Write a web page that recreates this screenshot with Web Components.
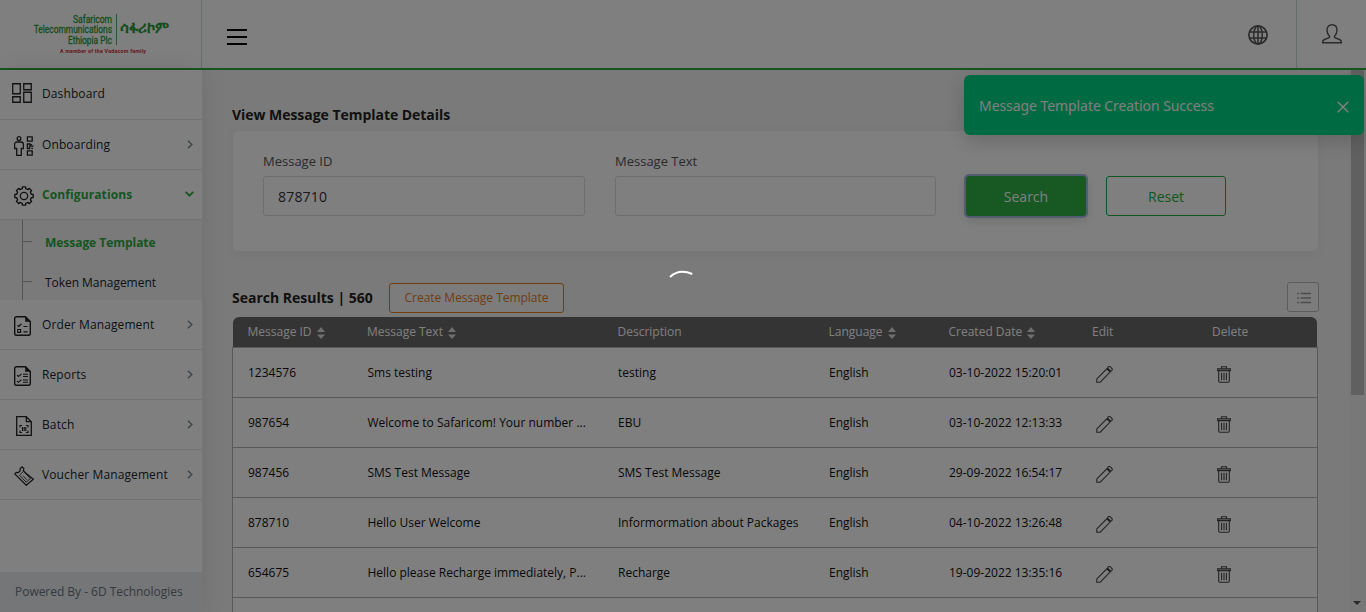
<!DOCTYPE html>
<html lang="en">
<head>
<meta charset="utf-8">
<title>View Message Template Details</title>
<style>
  html, body { margin: 0; height: 100%; overflow: hidden; }
  body { font-family: "Open Sans", "Noto Sans", sans-serif; font-size: 12px; color: #212529; background: #f4f4f4; }
</style>
</head>
<body>
<app-shell></app-shell>
<script>
const define = (name, html, setup) => {
  const tpl = document.createElement('template');
  tpl.innerHTML = html;
  customElements.define(name, class extends HTMLElement {
    constructor() {
      super();
      this.attachShadow({ mode: 'open' }).appendChild(tpl.content.cloneNode(true));
    }
    connectedCallback() { if (setup) setup(this, this.shadowRoot); }
  });
};

/* ---------- icons ---------- */
const gear = (() => {
  let d = '';
  const n = 8, c = 10;
  for (let i = 0; i < n; i++) {
    const a = i * 2 * Math.PI / n;
    [[-.24, 7.5], [-.17, 9.3], [.17, 9.3], [.24, 7.5]].forEach(([o, r], k) => {
      const x = (c + r * Math.sin(a + o)).toFixed(2), y = (c - r * Math.cos(a + o)).toFixed(2);
      d += (i || k ? 'L' : 'M') + x + ' ' + y;
    });
  }
  return d + 'Z';
})();
const ICONS = {
  dashboard: [20, 20, '<path d="M.75.75h7.5v10H.75zM11.75.75h7.5v6h-7.5zM11.75 9.25h7.5v10h-7.5zM.75 13.75h7.5v5.5H.75z" stroke-width="1.3"/>'],
  onboarding: [20, 20, '<g stroke-width="1.300"><circle cx="5" cy="2.600" r="1.900"/><path d="M3 6h4c1.500 0 2.400.9 2.400 2.300v4.200H7.300v6.800H2.700v-6.800H.6V8.300C.6 6.900 1.500 6 3 6z"/><path d="M13.400.8h4.800v4.400h-4.800zM13.400 14.800h4.800v4.400h-4.800z"/><path d="M13.400 7.500v5h2.200v-2M13 8h3v2.200h3.500M17.500 8v1.200M17.300 12.300h1.700"/></g>'],
  gear: [20, 20, `<path d="${gear}" stroke-width="1.400" stroke-linejoin="round"/><circle cx="10" cy="10" r="3.700" stroke-width="1.300"/>`],
  order: [17, 20, '<path d="M11.500.7H2.500a1.800 1.800 0 0 0-1.800 1.800v15a1.800 1.800 0 0 0 1.800 1.800h12a1.800 1.800 0 0 0 1.800-1.800V5.500z" stroke-width="1.400"/><path d="M11.200.5v5.300h5.300z" fill="currentColor" stroke="none"/><path d="M3.500 9.200l1.300 1.200 2.700-2.600M9.500 10.500h4M9.500 15.800h4M3.800 13.500h2.800v2.800H3.800z" stroke-width="1.200"/>'],
  reports: [17, 20, '<path d="M11.500.7H2.500a1.800 1.800 0 0 0-1.800 1.800v15a1.800 1.800 0 0 0 1.800 1.800h12a1.800 1.800 0 0 0 1.800-1.800V5.500z" stroke-width="1.400"/><path d="M11.200.5v5.300h5.300z" fill="currentColor" stroke="none"/><path d="M3 9.200l1.500 1.300 3-2.700M3 15l1.500 1.300 3-2.700M9 8.300h5M9 10.500h5M9 14h5M9 16.300h5" stroke-width="1.100"/>'],
  batch: [16, 20, '<path d="M10.300.7H.7v18.600h14.600V5.700zM10.300.7v5h5" stroke-width="1.300"/><path d="M4 11.500v-2h2M10 9.500h2v2M4 14.500v2h2M10 16.500h2v-2M6.500 11v4M8.200 11v4M9.800 11v4" stroke-width="1.100"/>'],
  voucher: [20, 20, '<path d="M8.200.8l1.600 1.700-.4 2.200 2.200 2.200L19.300 13.200 12.300 19.300.8 7.900l1.400-1.500 2.100.2 1.900-1.800L6 2.800z" stroke-width="1.200"/><path d="M5.600 9.200l3.900-3.900 6.900 7.200-4.200 3.700zM9 9.700l4 4" stroke-width=".9"/>'],
  globe: [20, 20, '<circle cx="10" cy="10" r="9.100" stroke-width="1.700"/><ellipse cx="10" cy="10" rx="4.300" ry="9.100" stroke-width="1.500"/><path d="M10 1v18M1.500 7h17M1.500 13h17" stroke-width="1.500"/>'],
  user: [20, 20, '<path d="M7.600 12.400C5.900 10.900 5 8.900 5 6.100 5 2.700 6.900.8 10 .8s5 1.900 5 5.300c0 2.800-.9 4.800-2.600 6.300l.2 1.200 4.900 1.900c1.200.5 1.800 1.100 1.800 2.100v1.200H.7v-1.200c0-1 .6-1.600 1.800-2.100l4.900-1.900z" stroke-width="1.400"/>'],
  right: [6, 9, '<path d="M.9.700l3.900 3.800-3.900 3.800" stroke-width="1.500"/>'],
  down: [9, 6, '<path d="M.7.900l3.800 3.800L8.300.900" stroke-width="1.700"/>'],
  close: [12, 12, '<path d="M.7.700l10.600 10.600M11.300.700L.7 11.300" stroke-width="1.500"/>'],
  list: [14, 12, '<path d="M3.500 1.500H14M3.500 6H14M3.500 10.500H14M.2 1.500h1.800M.2 6h1.800M.2 10.500h1.800" stroke-width="1.400"/>'],
  pencil: [17, 17, '<path d="M.8 16.200v-3.300L10.800 2.800l3.300 3.300L4.200 16.200zM11.600 2.100c0-1.300 1.500-1.900 2.500-1.400l1.900 1.800c.6 1.200-.1 2.500-1.300 2.700z" stroke-width="1.100"/>'],
  trash: [14, 17, '<path d="M.6 2.900h12.800v1.700H.6zM4.500 2.800V.7h5v2.100M1.700 4.800v10.300c0 .8.400 1.200 1.200 1.200h8.200c.8 0 1.200-.4 1.200-1.200V4.800M4.600 6.700v7.600M7 6.700v7.600M9.400 6.700v7.600" stroke-width="1.100"/>'],
  sort: [8, 12, '<path d="M0 5l4-5 4 5zM0 7.500l4 4.500 4-4.500z" fill="currentColor" stroke="none"/>'],
  caret: [8, 4, '<path d="M0 0h8L4 4z" fill="currentColor" stroke="none"/>']
};
define('ui-icon', '<style>:host{display:block;flex:none;line-height:0}</style><span></span>', (el, root) => {
  const [w, h, body] = ICONS[el.getAttribute('name')];
  root.querySelector('span').innerHTML =
    `<svg width="${w}" height="${h}" viewBox="0 0 ${w} ${h}" fill="none" stroke="currentColor">${body}</svg>`;
});

/* ---------- header ---------- */
define('brand-logo', `
<style>
  :host { display: block; width: 201px; height: 68px; border-right: 1px solid #cfe3d8; flex: none; }
  text { font-family: Roboto, sans-serif; }
</style>
<svg width="201" height="68" viewBox="0 0 201 68">
  <g fill="#2a9a3c" stroke="#2a9a3c" stroke-width=".3" font-size="10.500" text-anchor="end">
    <text transform="translate(112 22.500) scale(.81 1)">Safaricom</text>
    <text transform="translate(112 33) scale(.8 1)">Telecommunications</text>
    <text transform="translate(112 43.500) scale(.8 1)">Ethiopia Plc</text>
  </g>
  <path d="M116.500 14v31" stroke="#58ad66"/>
  <text transform="translate(120 32.500) scale(1 1.350)" font-size="11.500" font-weight="700" fill="#2a9a3c" textLength="49" lengthAdjust="spacingAndGlyphs">ሳፋሪኮም</text>
  <text x="60" y="53" font-size="5.300" font-weight="700" fill="#d02c38" textLength="86">A member of the Vodacom family</text>
</svg>`);

define('top-bar', `
<style>
  :host { display: flex; height: 68px; background: #fff; border-bottom: 2px solid #2cab42; color: #333; }
  .menu { display: grid; gap: 5px; margin: 29px 0 0 25px; align-content: start; }
  .menu i { width: 20px; height: 2px; background: #000; }
  .globe { margin: 25px 28px 0 auto; color: #555; }
  .user { border-left: 1px solid #c4e0d4; width: 44px; padding: 24px 0 0 25px; color: #555; }
</style>
<brand-logo></brand-logo>
<div class="menu"><i></i><i></i><i></i></div>
<ui-icon class="globe" name="globe"></ui-icon>
<div class="user"><ui-icon name="user"></ui-icon></div>`);

/* ---------- sidebar ---------- */
define('nav-item', `
<style>
  :host { display: flex; align-items: center; height: 49px; border-bottom: 1px solid #e4e4e4; font-size: 12px; letter-spacing: .11px; }
  .ico { width: 42px; box-sizing: border-box; padding-left: 14px; padding-top: 2px; color: #222; }
  :host([icon="dashboard"]) .ico { padding: 0 0 4px 12px; }
  :host([icon="dashboard"]) .label { padding: 0 0 1px; }
  :host([icon="batch"]) .ico { padding-left: 16px; }
  .label { flex: 1; line-height: 20px; white-space: nowrap; padding-top: 1px; }
  .arrow { margin-right: 9px; color: #7c8c92; padding-bottom: 1px; }
  :host([open]) .label { color: #2cab42; font-weight: 700; }
  :host([open]) .arrow { color: #2cab42; margin-right: 8px; }
</style>
<div class="ico"></div><div class="label"><slot></slot></div><div class="arrow"></div>`, (el, root) => {
  root.querySelector('.ico').innerHTML = `<ui-icon name="${el.getAttribute('icon')}"></ui-icon>`;
  if (!el.hasAttribute('leaf'))
    root.querySelector('.arrow').innerHTML = `<ui-icon name="${el.hasAttribute('open') ? 'down' : 'right'}"></ui-icon>`;
});

define('sub-item', `
<style>
  :host { display: flex; height: 40px; font-size: 12px; letter-spacing: -.04px; margin-left: 22px; border-left: 1px solid #aaa; }
  i { width: 9px; height: 1px; background: #aaa; margin-top: 21px; }
  span { margin: 13px 0 0 13px; line-height: 20px; white-space: nowrap; }
  :host([active]) span { color: #2cab42; font-weight: 700; }
</style><i></i><span><slot></slot></span>`);

define('side-bar', `
<style>
  :host { display: flex; flex-direction: column; width: 202px; background: #fff; flex: none; box-shadow: 0 0 24px rgba(0,0,0,.1); z-index: 1; }
  .sub { background: #f4f4f4; }
  .foot { margin-top: auto; height: 40px; line-height: 39px; padding-left: 15px; background: #e9ecef; color: #6c757d; font-size: 12px; letter-spacing: -.03px; }
</style>
<nav-item icon="dashboard" leaf>Dashboard</nav-item>
<nav-item icon="onboarding">Onboarding</nav-item>
<nav-item icon="gear" open>Configurations</nav-item>
<div class="sub"><sub-item active>Message Template</sub-item><sub-item>Token Management</sub-item></div>
<nav-item icon="order">Order Management</nav-item>
<nav-item icon="reports">Reports</nav-item>
<nav-item icon="batch">Batch</nav-item>
<nav-item icon="voucher">Voucher Management</nav-item>
<div class="foot">Powered By - 6D Technologies</div>`);

/* ---------- search form ---------- */
define('form-field', `
<style>
  :host { display: block; }
  label { display: block; font-size: 13px; line-height: 20px; height: 25px; color: #555; }
  .box { height: 38px; line-height: 39px; border: 1px solid #dcdcdc; border-radius: 3px; padding-left: 14px; font-size: 14px; letter-spacing: .2px; color: #333; }
</style><label></label><div class="box"><slot></slot></div>`, (el, root) => {
  root.querySelector('label').textContent = el.getAttribute('label');
});

define('ui-button', `
<style>
  :host { display: block; box-sizing: border-box; text-align: center; border-radius: 3px; border: 1px solid #2cab42; color: #2cab42; height: 40px; line-height: 39px; font-size: 14px; white-space: nowrap; }
  :host([kind="primary"]) { background: #2fb146; border-color: #2fb146; color: #fff; box-shadow: 0 0 0 2px #a9b8e4, 0 4px 12px rgba(0,0,0,.15); }
  :host([kind="create"]) { height: 30px; line-height: 28px; border-color: #e07b1c; color: #e07b1c; background: #f9f9f9; font-size: 12px; letter-spacing: -.03px; }
</style><slot></slot>`);

define('search-panel', `
<style>
  :host { display: grid; grid-template-columns: 322px 321px 120px 120px; column-gap: 30px; align-items: end; align-content: start;
    box-sizing: border-box; height: 120px; padding: 20px 30px 0; background: #fff; border-radius: 5px; box-shadow: 0 2px 12px rgba(0,0,0,.05); }
  .reset { margin-left: -10px; margin-right: 10px; }
</style>
<form-field label="Message ID">878710</form-field>
<form-field label="Message Text"></form-field>
<ui-button kind="primary">Search</ui-button>
<ui-button class="reset">Reset</ui-button>`);

/* ---------- results ---------- */
define('results-table', `
<style>
  :host { display: block; width: 1086px; }
  .row { display: grid; grid-template-columns: 119.500px 250.500px 211px 120px 143.500px 120px 1fr; padding-left: 15px; }
  .head { height: 30px; line-height: 30px; margin: 0 1px; padding-left: 14.500px; background: #686868; color: #fff; border-radius: 6px 6px 0 0; }
  .head span { display: flex; gap: 5px; align-items: center; height: 29px; }
  .head ui-icon { margin-top: 2px; color: #ddd; }
  .body { height: 49px; line-height: 49px; border: 1px solid #b2b2b2; border-bottom: 0; background: #fff; color: #111; }
  .head, .body { font-size: 12px; white-space: nowrap; }
  .body ui-icon { color: #444; padding-top: 18px; }
  .body .pen { padding-left: 3px; } .body .bin { padding-left: 4px; }
</style>
<div class="row head"></div><div class="rows"></div>`, (el, root) => {
  const s = '<ui-icon name="sort"></ui-icon>';
  root.querySelector('.head').innerHTML = ['Message ID' + s, 'Message Text' + s, 'Description', 'Language' + s, 'Created Date' + s, 'Edit', 'Delete']
    .map(t => `<span>${t}</span>`).join('');
  root.querySelector('.rows').innerHTML = [
    ['1234576', 'Sms testing', 'testing', 'English', '03-10-2022 15:20:01'],
    ['987654', 'Welcome to Safaricom! Your number ...', 'EBU', 'English', '03-10-2022 12:13:33'],
    ['987456', 'SMS Test Message', 'SMS Test Message', 'English', '29-09-2022 16:54:17'],
    ['878710', 'Hello User Welcome', 'Informormation about Packages', 'English', '04-10-2022 13:26:48'],
    ['654675', 'Hello please Recharge immediately, P...', 'Recharge', 'English', '19-09-2022 13:35:16'],
    null
  ].map(r => r ? `<div class="row body">${r.map(t => `<span>${t}</span>`).join('')}<ui-icon class="pen" name="pencil"></ui-icon><ui-icon class="bin" name="trash"></ui-icon></div>`
    : '<div class="row body"></div>').join('');
});

define('page-content', `
<style>
  :host { display: block; flex: 1; min-width: 0; height: 542px; overflow: hidden; padding-left: 30px; box-sizing: border-box; }
  h2 { margin: 0; font-size: 14px; font-weight: 700; letter-spacing: -.04px; line-height: 20px; color: #222; white-space: nowrap; }
  .title { padding-top: 35px; }
  search-panel { margin: 6px 0 0 1px; width: 1085px; }
  .bar { display: flex; align-items: flex-start; width: 1087px; margin-top: 31px; height: 35px; }
  .bar h2 { width: 157px; padding-top: 6px; letter-spacing: 0; }
  .bar ui-button { width: 175px; margin-top: 1px; }
  .list { margin-left: auto; box-sizing: border-box; width: 32px; height: 30px; border: 1px solid #b8b8b8; border-radius: 3px; display: grid; place-items: center; color: #999; background: #f9f9f9; }
  .list ui-icon { padding: 1px 0 0 1px; }
</style>
<h2 class="title">View Message Template Details</h2>
<search-panel></search-panel>
<div class="bar"><h2>Search Results | 560</h2><ui-button kind="create">Create Message Template</ui-button><div class="list"><ui-icon name="list"></ui-icon></div></div>
<results-table></results-table>`);

define('scroll-track', `
<style>
  :host { display: flex; flex-direction: column; justify-content: space-between; width: 17px; background: #f1f1f1; }
  i { width: 13px; height: 325px; margin-left: 2px; background: #c1c1c1; }
  ui-icon { margin: 0 0 7px 4px; color: #505050; }
</style><i></i><ui-icon name="caret"></ui-icon>`);

/* ---------- overlays ---------- */
define('toast-message', `
<style>
  :host { position: absolute; left: 964px; top: 75px; width: 400px; height: 60px; box-sizing: border-box; padding: 0 15px; display: flex; align-items: center; justify-content: space-between;
    border-radius: 6px; background: #00d684; color: #fff; font-family: "Noto Sans", sans-serif; font-size: 14px; letter-spacing: -.07px; box-shadow: 0 6px 20px rgba(0,0,0,.18); z-index: 2; }
  ui-icon { margin-top: 4px; }
</style><span><slot></slot></span><ui-icon name="close"></ui-icon>`);

define('loading-mask', `
<style>
  :host { position: absolute; inset: 0; background: rgba(0,0,0,.5); z-index: 3; }
  svg { position: absolute; left: 664px; top: 268px; }
</style>
<svg width="36" height="36" viewBox="0 0 36 36" fill="none"><path d="M6 9Q15 .3 28.300 6" stroke="#fff" stroke-width="2"/></svg>`);

define('app-shell', `
<style>
  :host { display: block; position: relative; width: 1366px; height: 612px; overflow: hidden; }
  main { display: flex; height: 542px; }
</style>
<top-bar></top-bar>
<main><side-bar></side-bar><page-content></page-content><scroll-track></scroll-track></main>
<toast-message>Message Template Creation Success</toast-message>
<loading-mask></loading-mask>`);
</script>
</body>
</html>
